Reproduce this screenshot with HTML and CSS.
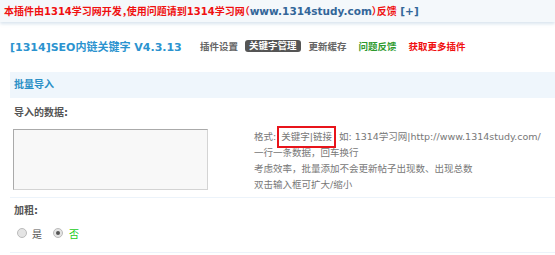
FILE: index.html
```html
<!DOCTYPE html>
<html>
<head>
<meta charset="utf-8">
<link rel="stylesheet" href="styles.css">
</head>
<body>
<div class="topbar">
  <span class="red">本插件由1314学习网开发，使用问题请到1314学习网（</span><span class="blue">www.1314study.com</span><span class="red">）反馈</span> <span class="blue">[+]</span>
</div>
<div class="titlerow">
  <div class="title">[1314]SEO内链关键字 V4.3.13</div>
  <nav class="nav">
    <span class="nav-item">插件设置</span>
    <span class="nav-item active">关键字管理</span>
    <span class="nav-item">更新缓存</span>
    <span class="nav-item green">问题反馈</span>
    <span class="nav-item redlink">获取更多插件</span>
  </nav>
</div>
<div class="section-head">批量导入</div>
<div class="field-label">导入的数据:</div>
<div class="field-row">
  <div class="textarea"></div>
  <div class="tips">
    <div class="tip">格式:<span class="hl">关键字|链接</span> 如: 1314学习网|http://www.1314study.com/</div>
    <div class="tip">一行一条数据，回车换行</div>
    <div class="tip">考虑效率，批量添加不会更新帖子出现数、出现总数</div>
    <div class="tip">双击输入框可扩大/缩小</div>
  </div>
</div>
<div class="sep"></div>
<div class="field-label bold2">加粗:</div>
<div class="radios">
  <span class="radio"></span><span class="rlabel">是</span>
  <span class="radio checked"></span><span class="rlabel green-text">否</span>
</div>
<div class="sep sep-last"></div>
</body>
</html>
```
FILE: styles.css
```css
html, body {
  margin: 0;
  padding: 0;
  background: #fff;
}
body {
  font-family: "DejaVu Sans", "Noto Sans CJK SC", sans-serif;
  font-size: 10px;
  color: #555;
  width: 555px;
  height: 255px;
  overflow: hidden;
}
.topbar {
  height: 22px;
  line-height: 22px;
  padding-left: 4px;
  background: #f4f8fb;
  box-shadow: 0 2px 3px rgba(150, 180, 205, 0.35);
  font-weight: bold;
  font-size: 10px;
  white-space: nowrap;
  font-feature-settings: "halt";
}
.red { color: #f01010; }
.blue { color: #336699; font-size: 10.5px; }
.titlerow {
  display: flex;
  align-items: center;
  margin-top: 15px;
  height: 18px;
  padding-left: 10px;
}
.title {
  font-size: 11px;
  font-weight: bold;
  color: #2b93cf;
  width: 190px;
  white-space: nowrap;
}
.nav {
  display: flex;
  align-items: center;
}
.nav-item {
  font-weight: bold;
  color: #666;
  font-size: 9.5px;
  margin-right: 12px;
}
.nav-item:first-child { margin-right: 7px; }
.nav-item.active {
  background: #555;
  color: #fff;
  border-radius: 3px;
  padding: 0 4px;
  line-height: 12px;
  margin-right: 8px;
}
.nav-item.green { color: #2e9a2e; }
.nav-item.redlink { color: #f01010; }
.section-head {
  margin: 17px 0 0 10px;
  height: 26px;
  line-height: 26px;
  padding-left: 4px;
  background: #eff6fc;
  color: #2a8fc6;
  font-weight: bold;
}
.field-label {
  margin: 7px 0 0 14px;
  font-weight: bold;
  color: #555;
  line-height: 16px;
}
.field-row {
  display: flex;
  margin-top: 8px;
  padding-left: 13px;
}
.textarea {
  width: 193px;
  height: 59px;
  background: #f8f8f8;
  border: 1px solid #d4d4d4;
  border-top-color: #aaa;
  border-left-color: #aaa;
}
.tips {
  margin-left: 46px;
  color: #777;
  font-size: 9.5px;
}
.tip {
  line-height: 16px;
  white-space: nowrap;
}
.hl {
  border: 2px solid #e8141b;
  padding: 3px 2px 4px;
  margin-left: 1px;
}
.sep {
  margin: 4px 0 0 10px;
  border-top: 1px solid #ecf3fa;
}
.bold2 { margin-top: 5px; }
.radios {
  display: flex;
  align-items: center;
  margin: 5px 0 0 17px;
  height: 18px;
}
.radio {
  width: 8px;
  height: 8px;
  border-radius: 50%;
  border: 1px solid #bbb;
  background: #e4e4e4;
  position: relative;
}
.radio.checked::after {
  content: "";
  position: absolute;
  left: 2px;
  top: 2px;
  width: 4px;
  height: 4px;
  border-radius: 50%;
  background: #555;
}
.rlabel {
  margin: 0 11px 0 5px;
  color: #555;
}
.rlabel.green-text { color: #22cc22; margin-left: 6px; }
.sep-last { margin-top: 10px; }
```
